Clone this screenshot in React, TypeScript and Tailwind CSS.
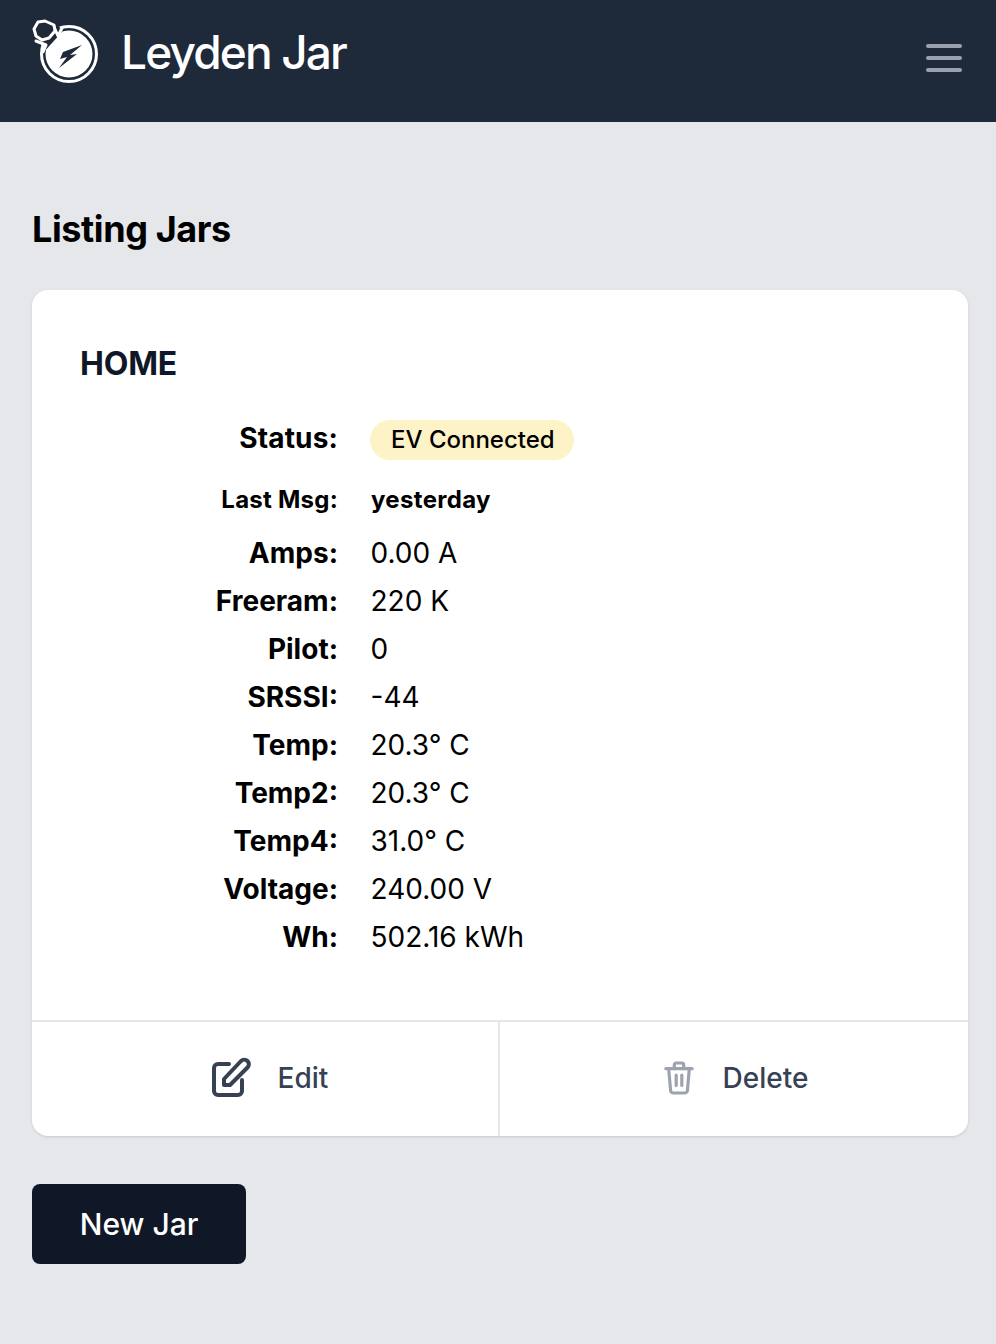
import React from 'react';

const rows = [
  ['Amps:', '0.00 A'],
  ['Freeram:', '220 K'],
  ['Pilot:', '0'],
  ['SRSSI:', '-44'],
  ['Temp:', '20.3° C'],
  ['Temp2:', '20.3° C'],
  ['Temp4:', '31.0° C'],
  ['Voltage:', '240.00 V'],
  ['Wh:', '502.16 kWh'],
];

const Logo = () => (
  <svg width="68" height="68" viewBox="0 0 68 68" fill="none" className="shrink-0">
    <circle cx="37" cy="36" r="27.5" stroke="white" strokeWidth="3" />
    <circle cx="37" cy="36" r="23.5" fill="white" />
    <path d="M3 22 L13 27 L10 36 L30 14 L26 6 L20 4 Z" fill="#1f2937" />
    <path d="M4 23 L14 27 L11 34" stroke="white" strokeWidth="3" strokeLinecap="round" strokeLinejoin="round" />
    <path d="M22 9 L26 18 L30 10" stroke="white" strokeWidth="3" strokeLinecap="round" strokeLinejoin="round" />
    <path d="M2 11 L6 4 L13 3 L22 7 L23 13 L17 20 L10 22 L4 18 Z" fill="#1f2937" stroke="white" strokeWidth="3" strokeLinejoin="round" />
    <path d="M50 27 L31 34 L28 41 L35 39 L27 50 L45 36 L38 37 Z" fill="#1f2937" />
  </svg>
);

const EditIcon = () => (
  <svg width="39" height="40" viewBox="0 0 39 40" fill="none" stroke="#374151" strokeWidth="4" strokeLinecap="round" strokeLinejoin="round" className="-mt-1">
    <path d="M17 7 H6 a4 4 0 0 0 -4 4 V34 a4 4 0 0 0 4 4 H26 a4 4 0 0 0 4 -4 V23" />
    <path d="M29 4 a4 4 0 0 1 6.5 6.5 L18 28 H12 V22 Z" />
  </svg>
);

const TrashIcon = () => (
  <svg width="30" height="36" viewBox="0 0 32 36" fill="none" stroke="#9ca3af" strokeWidth="3.4" strokeLinecap="round" strokeLinejoin="round" className="-mt-[2px]">
    <path d="M2 8 H30" />
    <path d="M5 8 L7 31 a3 3 0 0 0 3 3 H22 a3 3 0 0 0 3 -3 L27 8" />
    <path d="M11 8 V4 a2 2 0 0 1 2 -2 H19 a2 2 0 0 1 2 2 V8" />
    <path d="M13 15 V26 M19 15 V26" />
  </svg>
);

const App = () => {
  return (
    <div className="min-h-[1344px] bg-gray-200 font-['Inter',sans-serif]">
      <header className="h-[122px] bg-gray-800 flex items-start justify-between pl-8 pr-[34px]">
        <div className="flex items-center pt-4 gap-[21px]">
          <Logo />
          <span className="text-[46px] leading-[72px] font-medium text-white tracking-[-1.85px]">Leyden Jar</span>
        </div>
        <div className="mt-[44px] flex flex-col gap-[8px]">
          <div className="w-9 h-1 bg-gray-400 rounded-sm" />
          <div className="w-9 h-1 bg-gray-400 rounded-sm" />
          <div className="w-9 h-1 bg-gray-400 rounded-sm" />
        </div>
      </header>

      <main className="pl-8 pr-7 pt-[83px]">
        <h1 className="text-[36px] leading-[48px] font-bold text-black tracking-[-0.4px]">Listing Jars</h1>

        <div className="mt-[37px] bg-white rounded-2xl shadow">
          <div className="px-12 pt-[50px] h-[730px]">
            <h2 className="text-[32px] leading-[48px] font-bold text-gray-900 uppercase tracking-[-0.2px]">Home</h2>
            <div className="mt-[22px] flex items-center h-[60px]">
              <div className="w-[258px] pb-1 text-right text-[28px] font-bold text-black tracking-[0.15px]">Status:</div>
              <div className="ml-8 pl-[21px] pr-[19px] h-10 flex items-center rounded-full bg-amber-100 text-[24px] font-medium text-black">EV Connected</div>
            </div>
            <div className="flex items-center h-[60px]">
              <div className="w-[258px] text-right text-[24px] font-bold text-black tracking-[0.25px]">Last Msg:</div>
              <div className="ml-[33px] text-[24px] font-bold text-black tracking-[0.33px]">yesterday</div>
            </div>
            <div className="-mt-[1.5px]">
              {rows.map(([label, value]) => (
                <div key={label} className="flex items-center h-12">
                  <div className="w-[258px] text-right text-[28px] font-bold text-black">{label}</div>
                  <div className="ml-[32.5px] text-[28px] text-black">{value}</div>
                </div>
              ))}
            </div>
          </div>
          <div className="flex h-[116px] border-t-2 border-gray-200">
            <div className="w-[468px] pl-[10px] flex items-center justify-center gap-[27px] border-r-2 border-gray-200">
              <EditIcon />
              <span className="text-[28px] font-medium text-gray-700 mb-[2px]">Edit</span>
            </div>
            <div className="flex-1 pl-1 flex items-center justify-center gap-[29px]">
              <TrashIcon />
              <span className="text-[28px] font-medium text-gray-700 mb-[2px]">Delete</span>
            </div>
          </div>
        </div>

        <button className="mt-12 w-[214px] h-20 rounded-lg bg-gray-900 text-white text-[30px] font-medium">New Jar</button>
      </main>
    </div>
  );
};

export default App;
